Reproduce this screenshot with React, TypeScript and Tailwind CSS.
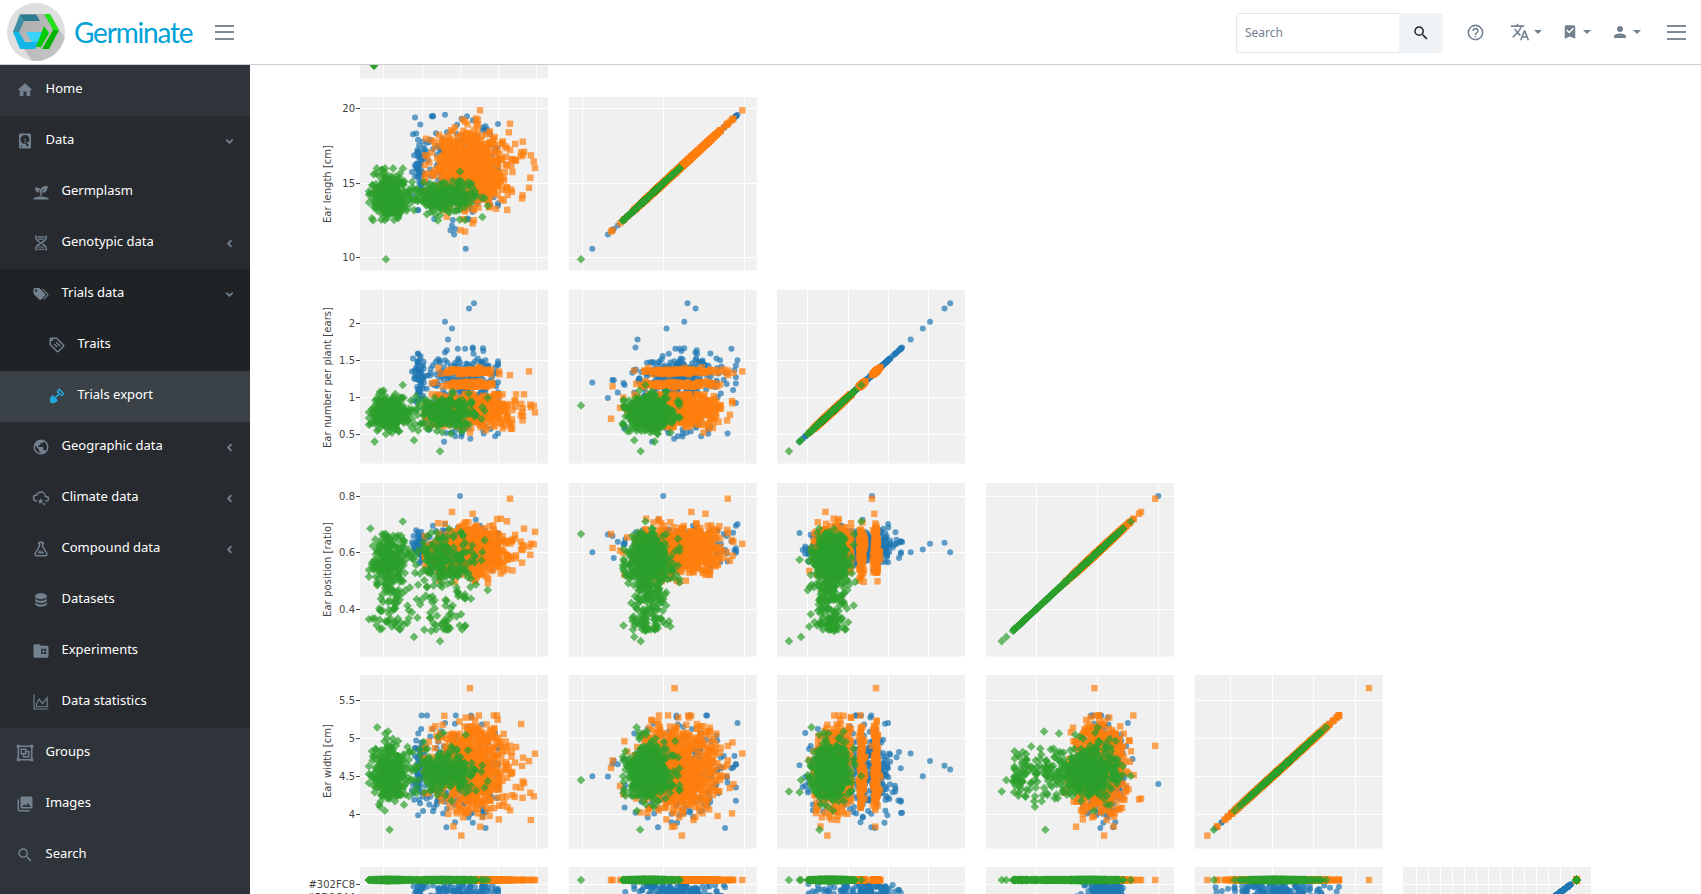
import { ChevronDown, ChevronLeft } from "lucide-react";

const paths: Record<string, string> = {
  home: "M10,20V14H14V20H19V12H22L12,3L2,12H5V20H10Z",
  harddisk:
    "M6,2H18A2,2 0 0,1 20,4V20A2,2 0 0,1 18,22H6A2,2 0 0,1 4,20V4A2,2 0 0,1 6,2M12,4A6,6 0 0,0 6,10C6,13.31 8.69,16 12.1,16L11.22,13.77C10.95,13.29 11.14,12.68 11.62,12.4L12.13,12.11C12.61,11.84 13.22,12.03 13.5,12.5L14.94,14.4C16.78,13.3 18,11.28 18,10A6,6 0 0,0 12,4M12,9A1,1 0 0,1 13,10A1,1 0 0,1 12,11A1,1 0 0,1 11,10A1,1 0 0,1 12,9M7,18A1,1 0 0,0 6,19A1,1 0 0,0 7,20A1,1 0 0,0 8,19A1,1 0 0,0 7,18M12.09,13.27L14.58,19.58L17.17,18.08L12.95,12.77L12.09,13.27Z",
  sprout:
    "M2,22V20C2,20 7,18 12,18C17,18 22,20 22,20V22H2M11.3,9.1C10.1,5.2 4,6.1 4,6.1C4,6.1 4.2,13.9 9.9,12.7C9.5,9.8 8,9 8,9C10.8,9 11,12.4 11,12.4V17C11.3,17 11.7,17 12,17C12.3,17 12.7,17 13,17V12.8C13,12.8 13,8.9 16,7.9C16,7.9 14,10.9 14,12.9C21,13.6 21,4 21,4C21,4 12.1,3 11.3,9.1Z",
  dna: "M4 2H6V4C6 5.44 6.68 6.61 7.88 7.78C8.74 8.61 9.89 9.41 11.09 10.2L9.26 11.39C8.27 10.72 7.31 10 6.5 9.21C5.07 7.82 4 6.1 4 4V2M18 2H20V4C20 6.1 18.93 7.82 17.5 9.21C16.09 10.59 14.29 11.73 12.54 12.84C10.79 13.96 9.09 15.05 7.88 16.22C6.68 17.39 6 18.56 6 20V22H4V20C4 17.9 5.07 16.18 6.5 14.79C7.91 13.41 9.71 12.27 11.46 11.16C13.21 10.04 14.91 8.95 16.12 7.78C17.32 6.61 18 5.44 18 4V2M14.74 12.61C15.73 13.28 16.69 14 17.5 14.79C18.93 16.18 20 17.9 20 20V22H18V20C18 18.56 17.32 17.39 16.12 16.22C15.26 15.39 14.11 14.59 12.91 13.8L14.74 12.61M7 3H17V4L16.94 4.5H7.06L7 4V3M7.68 6H16.32C16.08 6.34 15.8 6.69 15.42 7.06L14.91 7.5H9.07L8.58 7.06C8.2 6.69 7.92 6.34 7.68 6M9.09 16.5H14.93L15.42 16.94C15.8 17.31 16.08 17.66 16.32 18H7.68C7.92 17.66 8.2 17.31 8.58 16.94L9.09 16.5M7.06 19.5H16.94L17 20V21H7V20L7.06 19.5Z",
  tags: "M5.5,9A1.5,1.5 0 0,0 7,7.5A1.5,1.5 0 0,0 5.5,6A1.5,1.5 0 0,0 4,7.5A1.5,1.5 0 0,0 5.5,9M17.41,11.58C17.77,11.94 18,12.44 18,13C18,13.55 17.78,14.05 17.41,14.41L12.41,19.41C12.05,19.77 11.55,20 11,20C10.45,20 9.95,19.78 9.58,19.41L2.59,12.42C2.22,12.05 2,11.55 2,11V6C2,4.89 2.89,4 4,4H9C9.55,4 10.05,4.22 10.41,4.58L17.41,11.58M13.54,5.71L14.54,4.71L21.41,11.58C21.78,11.94 22,12.45 22,13C22,13.55 21.78,14.05 21.42,14.41L16.04,19.79L15.04,18.79L20.75,13L13.54,5.71Z",
  tag: "M5.5,7A1.5,1.5 0 0,0 7,5.5A1.5,1.5 0 0,0 5.5,4A1.5,1.5 0 0,0 4,5.5A1.5,1.5 0 0,0 5.5,7M21.41,11.58C21.77,11.94 22,12.44 22,13C22,13.55 21.78,14.05 21.41,14.41L14.41,21.41C14.05,21.77 13.55,22 13,22C12.45,22 11.95,21.77 11.58,21.41L2.59,12.41C2.22,12.05 2,11.55 2,11V4C2,2.89 2.89,2 4,2H11C11.55,2 12.05,2.22 12.41,2.58L21.41,11.58M13,20L20,13L11,4H4V11L13,20M10.09,8.91L11.5,7.5L17,13L15.59,14.41L10.09,8.91M7.59,11.41L9,10L13,14L11.59,15.41L7.59,11.41Z",
  shovel:
    "M15.1 1.81L12.27 4.64C11.5 5.42 11.5 6.69 12.27 7.47L13.68 8.88L9.13 13.43L6.31 10.6L4.89 12C-.06 17 3.5 20.5 3.5 20.5C3.5 20.5 7 24 12 19.09L13.41 17.68L10.61 14.88L15.15 10.34L16.54 11.73C17.32 12.5 18.59 12.5 19.37 11.73L22.2 8.9L15.1 1.81M17.93 10.28L16.55 8.9L15.11 7.46L13.71 6.06L15.12 4.65L19.35 8.88L17.93 10.28Z",
  earth:
    "M17.9,17.39C17.64,16.59 16.89,16 16,16H15V13A1,1 0 0,0 14,12H8V10H10A1,1 0 0,0 11,9V7H13A2,2 0 0,0 15,5V4.59C17.93,5.77 20,8.64 20,12C20,14.08 19.2,15.97 17.9,17.39M11,19.93C7.05,19.44 4,16.08 4,12C4,11.38 4.08,10.78 4.21,10.21L9,15V16A2,2 0 0,0 11,18M12,2A10,10 0 0,0 2,12A10,10 0 0,0 12,22A10,10 0 0,0 22,12A10,10 0 0,0 12,2Z",
  cloud:
    "M6,17A5,5 0 0,1 1,12A5,5 0 0,1 6,7C7,4.65 9.3,3 12,3C15.43,3 18.24,5.66 18.5,9.03L19,9A4,4 0 0,1 23,13A4,4 0 0,1 19,17H17.5V15H19A2,2 0 0,0 21,13A2,2 0 0,0 19,11H17V10A5,5 0 0,0 12,5C9.5,5 7.45,6.82 7.06,9.19C6.73,9.07 6.37,9 6,9A3,3 0 0,0 3,12A3,3 0 0,0 6,15H6.5V17H6M11.5,12L12.7,15H15.5L13.3,17L14.2,20L11.5,18.2L8.8,20L9.7,17L7.5,15H10.3L11.5,12M16.5,18.5A1.5,1.5 0 0,1 18,20A1.5,1.5 0 0,1 16.5,21.5A1.5,1.5 0 0,1 15,20A1.5,1.5 0 0,1 16.5,18.5Z",
  flask:
    "M5,19A1,1 0 0,0 6,20H18A1,1 0 0,0 19,19C19,18.79 18.93,18.59 18.82,18.43L13,8.35V4H11V8.35L5.18,18.43C5.07,18.59 5,18.79 5,19M6,22A3,3 0 0,1 3,19C3,18.4 3.18,17.84 3.5,17.37L9,7.81V6A1,1 0 0,1 8,5V4A2,2 0 0,1 10,2H14A2,2 0 0,1 16,4V5A1,1 0 0,1 15,6V7.81L20.5,17.37C20.82,17.84 21,18.4 21,19A3,3 0 0,1 18,22H6M13,16L14.34,14.66L16.27,18H7.73L10.39,13.39L13,16M12.5,12A0.5,0.5 0 0,1 13,12.5A0.5,0.5 0 0,1 12.5,13A0.5,0.5 0 0,1 12,12.5A0.5,0.5 0 0,1 12.5,12Z",
  database:
    "M12,3C7.58,3 4,4.79 4,7C4,9.21 7.58,11 12,11C16.42,11 20,9.21 20,7C20,4.79 16.42,3 12,3M4,9V12C4,14.21 7.58,16 12,16C16.42,16 20,14.21 20,12V9C20,11.21 16.42,13 12,13C7.58,13 4,11.21 4,9M4,14V17C4,19.21 7.58,21 12,21C16.42,21 20,19.21 20,17V14C20,16.21 16.42,18 12,18C7.58,18 4,16.21 4,14Z",
  folder:
    "M4 3H10L12 5H20C21.1 5 22 5.9 22 7V19C22 20.1 21.1 21 20 21H4C2.9 21 2 20.1 2 19V5C2 3.9 2.9 3 4 3ZM12 9V12H15V9H12ZM16 9V12H19V9H16ZM12 13V16H15V13H12ZM16 13V16H19V13H16Z",
  chart:
    "M2 2H3.5V20.5H22V22H2V2ZM5 19V14.5L9.5 6.5L14 13L21 4V19H5ZM6.5 17.5H19.5V8.5L14 15.5L9.5 9.5L6.5 15V17.5Z",
  group:
    "M1,1V5H2V19H1V23H5V22H19V23H23V19H22V5H23V1H19V2H5V1M5,4H19V5H20V19H19V20H5V19H4V5H5M6,6V14H9V18H18V9H14V6M8,8H12V12H8M14,11H16V16H11V14H14",
  images:
    "M22,16V4A2,2 0 0,0 20,2H8A2,2 0 0,0 6,4V16A2,2 0 0,0 8,18H20A2,2 0 0,0 22,16M11,12L13.03,14.71L16,11L20,16H8M2,6V20A2,2 0 0,0 4,22H18V20H4V6",
  search:
    "M9.5,3A6.5,6.5 0 0,1 16,9.5C16,11.11 15.41,12.59 14.44,13.73L14.71,14H15.5L20.5,19L19,20.5L14,15.5V14.71L13.73,14.44C12.59,15.41 11.11,16 9.5,16A6.5,6.5 0 0,1 3,9.5A6.5,6.5 0 0,1 9.5,3M9.5,5C7,5 5,7 5,9.5C5,12 7,14 9.5,14C12,14 14,12 14,9.5C14,7 12,5 9.5,5Z",
  help: "M11,18H13V16H11V18M12,2A10,10 0 0,0 2,12A10,10 0 0,0 12,22A10,10 0 0,0 22,12A10,10 0 0,0 12,2M12,20C7.59,20 4,16.41 4,12C4,7.59 7.59,4 12,4C16.41,4 20,7.59 20,12C20,16.41 16.41,20 12,20M12,6A4,4 0 0,0 8,10H10A2,2 0 0,1 12,8A2,2 0 0,1 14,10C14,12 11,11.75 11,15H13C13,12.75 16,12.5 16,10A4,4 0 0,0 12,6Z",
  translate:
    "M12.87,15.07L10.33,12.56L10.36,12.53C12.1,10.59 13.34,8.36 14.07,6H17V4H10V2H8V4H1V6H12.17C11.5,7.92 10.44,9.75 9,11.35C8.07,10.32 7.3,9.19 6.69,8H4.69C5.42,9.63 6.42,11.17 7.67,12.56L2.58,17.58L4,19L9,14L12.11,17.11L12.87,15.07M18.5,10H16.5L12,22H14L15.12,19H19.87L21,22H23L18.5,10M15.88,17L17.5,12.67L19.12,17H15.88Z",
  bookmark:
    "M17,3A2,2 0 0,1 19,5V21L12,18L5,21V5C5,3.89 5.9,3 7,3H17M11,14L17.25,7.76L15.84,6.34L11,11.18L8.41,8.59L7,10L11,14Z",
  account:
    "M12,4A4,4 0 0,1 16,8A4,4 0 0,1 12,12A4,4 0 0,1 8,8A4,4 0 0,1 12,4M12,14C16.42,14 20,15.79 20,18V20H4V18C4,15.79 7.58,14 12,14Z",
};

function Icon({ name, className }: { name: string; className: string }) {
  return (
    <svg viewBox="0 0 24 24" className={className} fill="currentColor">
      <path d={paths[name]} fillRule="evenodd" />
    </svg>
  );
}

type NavItem = {
  label: string;
  icon: string;
  level: number;
  bg: string;
  chevron?: "down" | "left";
  active?: boolean;
};

const navItems: NavItem[] = [
  { label: "Home", icon: "home", level: 0, bg: "bg-[#2f343b]" },
  { label: "Data", icon: "harddisk", level: 0, bg: "bg-[#272a2f]", chevron: "down" },
  { label: "Germplasm", icon: "sprout", level: 1, bg: "bg-[#272a2f]" },
  { label: "Genotypic data", icon: "dna", level: 1, bg: "bg-[#272a2f]", chevron: "left" },
  { label: "Trials data", icon: "tags", level: 1, bg: "bg-[#1f2326]", chevron: "down" },
  { label: "Traits", icon: "tag", level: 2, bg: "bg-[#1f2326]" },
  { label: "Trials export", icon: "shovel", level: 2, bg: "bg-[#3a4248]", active: true },
  { label: "Geographic data", icon: "earth", level: 1, bg: "bg-[#272a2f]", chevron: "left" },
  { label: "Climate data", icon: "cloud", level: 1, bg: "bg-[#272a2f]", chevron: "left" },
  { label: "Compound data", icon: "flask", level: 1, bg: "bg-[#272a2f]", chevron: "left" },
  { label: "Datasets", icon: "database", level: 1, bg: "bg-[#272a2f]" },
  { label: "Experiments", icon: "folder", level: 1, bg: "bg-[#272a2f]" },
  { label: "Data statistics", icon: "chart", level: 1, bg: "bg-[#272a2f]" },
  { label: "Groups", icon: "group", level: 0, bg: "bg-[#2f343b]" },
  { label: "Images", icon: "images", level: 0, bg: "bg-[#2f343b]" },
  { label: "Search", icon: "search", level: 0, bg: "bg-[#2f343b]" },
];

function Logo() {
  return (
    <svg viewBox="7 3 58 58" className="w-[58px] h-[58px] shrink-0">
      <defs>
        <clipPath id="logo-clip">
          <circle cx="36" cy="32" r="29" />
        </clipPath>
        <linearGradient id="logo-shadow" x1="0" y1="0" x2="1" y2="1">
          <stop offset="0" stopColor="#a9a9a9" />
          <stop offset="1" stopColor="#d4d4d4" />
        </linearGradient>
      </defs>
      <circle cx="36" cy="32" r="29" fill="#dfdfdf" />
      <polygon
        clipPath="url(#logo-clip)"
        points="20,14 50,14 60,31 80,55 60,80 38,70 13,32"
        fill="url(#logo-shadow)"
      />
      <polygon points="20,14.5 36,14.5 40,21 24,21" fill="#2a7a90" />
      <polygon points="20,14.5 24,21 19,32 13,32" fill="#3c8fa6" />
      <polygon points="13,32 19,32 25,42 38,42 35,49 20,49" fill="#12b5e6" />
      <polygon points="26,32 43,32 38,42 32,42" fill="#37d2ff" />
      <polygon points="44,14 50,14 59,30 53,30" fill="#22e01a" />
      <polygon points="53,30 59,30 49,49 42,49" fill="#00b300" />
      <polygon points="44,26 49,33 41,47 36,47" fill="#00cc00" />
    </svg>
  );
}

function Caret() {
  return <span className="ml-[4px] w-0 h-0 border-x-[4px] border-t-[4px] border-x-transparent border-t-[#73818f]" />;
}

function Header() {
  return (
    <header className="h-[65px] shrink-0 flex items-center bg-white border-b border-[#c8ced3]">
      <div className="pl-[7px] flex items-center">
        <Logo />
        <span className="ml-[9px] font-['Lato',sans-serif] text-[28px] tracking-[-1.2px] leading-none text-[#00a2d8]">
          Germinate
        </span>
      </div>
      <div className="ml-[23px] w-[19px] flex flex-col gap-[4.5px]">
        <span className="h-[2px] bg-[#7f8c98]" />
        <span className="h-[2px] bg-[#7f8c98]" />
        <span className="h-[2px] bg-[#7f8c98]" />
      </div>
      <div className="ml-auto flex items-center pr-[15px] text-[#73818f]">
        <div className="flex h-[40px] w-[207px] mt-[1px] rounded-[4px]">
          <input
            placeholder="Search"
            className="w-[163px] px-[8px] text-[12px] font-['Noto_Sans',sans-serif] border border-[#e4e7ea] border-r-0 rounded-l-[4px] placeholder:text-[#73818f] outline-none"
          />
          <div className="flex-1 flex items-center justify-center bg-[#f0f3f5] rounded-r-[4px]">
            <Icon name="search" className="w-[18px] h-[18px] text-[#23282c]" />
          </div>
        </div>
        <Icon name="help" className="ml-[23px] w-[19px] h-[19px]" />
        <div className="ml-[25px] flex items-center">
          <Icon name="translate" className="w-[20px] h-[20px]" />
          <Caret />
        </div>
        <div className="ml-[19px] flex items-center">
          <Icon name="bookmark" className="w-[18px] h-[18px]" />
          <Caret />
        </div>
        <div className="ml-[20px] flex items-center">
          <Icon name="account" className="w-[18px] h-[18px]" />
          <Caret />
        </div>
        <div className="ml-[26px] w-[19px] flex flex-col gap-[4.5px]">
          <span className="h-[2px] bg-[#7f8c98]" />
          <span className="h-[2px] bg-[#7f8c98]" />
          <span className="h-[2px] bg-[#7f8c98]" />
        </div>
      </div>
    </header>
  );
}

function Sidebar() {
  return (
    <aside className="w-[250px] shrink-0 bg-[#2f343b] font-['Noto_Sans',sans-serif] text-[13px] text-white">
      {navItems.map((item) => (
        <div
          key={item.label}
          className={`h-[51px] flex items-center pr-[15px] ${item.bg} ${
            item.level === 0 ? "pl-[16px]" : item.level === 1 ? "pl-[32px]" : "pl-[48px]"
          }`}
        >
          <Icon
            name={item.icon}
            className={`w-[18px] h-[18px] mr-[11.5px] mb-[1px] shrink-0 ${item.active ? "text-[#20a8d8]" : "text-[#73818f]"}`}
          />
          <span className="mb-[3px]">{item.label}</span>
          {item.chevron === "down" && <ChevronDown className="ml-auto w-[11px] h-[11px] text-[#73818f]" strokeWidth={4} />}
          {item.chevron === "left" && <ChevronLeft className="ml-auto w-[11px] h-[11px] text-[#73818f]" strokeWidth={4} />}
        </div>
      ))}
    </aside>
  );
}

// scatter matrix data, seeded so the picture stays the same
type Pt = { a: number; L: number; N: number; P: number; W: number; cx: number; cy: number };

let seed = 20240611;
const rnd = () => {
  seed = (seed + 0x6d2b79f5) | 0;
  let t = Math.imul(seed ^ (seed >>> 15), 1 | seed);
  t = (t + Math.imul(t ^ (t >>> 7), 61 | t)) ^ t;
  return ((t ^ (t >>> 14)) >>> 0) / 4294967296;
};
const gauss = (m: number, s: number) => {
  const u = Math.max(rnd(), 1e-6);
  return m + s * Math.sqrt(-2 * Math.log(u)) * Math.cos(2 * Math.PI * rnd());
};
const range = (a: number, b: number) => a + (b - a) * rnd();
const clamp = (v: number, lo: number, hi: number) => Math.min(hi, Math.max(lo, v));
const blueRow = (y: number) => ({ cy: y, cx: 1576.7 - (y - 880) / 0.75 });

const blue: Pt[] = [];
for (let i = 0; i < 340; i++) {
  const stripe = rnd() < 0.12;
  const N = rnd() < 0.75 ? gauss(1.25, 0.17) : gauss(0.75, 0.15);
  blue.push({
    a: stripe ? gauss(420, 3) : clamp(gauss(462, 19), 412, 498),
    L: clamp(stripe ? gauss(16, 1.2) : gauss(15.8, 1.5), 11.5, 19.5),
    N: stripe ? range(0.9, 1.6) : N,
    P: clamp(gauss(0.62, 0.032), 0.48, 0.72),
    W: clamp(gauss(4.55, 0.27), 3.75, 5.3),
    ...blueRow(rnd() < 0.75 ? range(885, 915) : range(884, 960)),
  });
}
blue.push(
  { a: 474, L: 16.5, N: 2.27, P: 0.6, W: 4.59, ...blueRow(930) },
  { a: 469, L: 17, N: 2.2, P: 0.634, W: 4.64, ...blueRow(930) },
  { a: 445, L: 16.3, N: 2.02, P: 0.63, W: 4.7, ...blueRow(930) },
  { a: 452, L: 15.2, N: 1.93, P: 0.61, W: 4.5, ...blueRow(930) },
  { a: 448, L: 13.4, N: 1.78, P: 0.6, W: 4.8, ...blueRow(930) },
  { a: 465.7, L: 10.6, N: 1.2, P: 0.6, W: 4.5, ...blueRow(930) },
  { a: 445, L: 19.6, N: 1.5, P: 0.7, W: 5.2, ...blueRow(930) },
  { a: 460, L: 15, N: 1.3, P: 0.8, W: 4.4, ...blueRow(930) }
);

const orange: Pt[] = [];
for (let i = 0; i < 720; i++) {
  const r = rnd();
  const band = r > 0.85 ? 1.35 : r > 0.7 ? 1.17 : 0;
  orange.push({
    a: clamp(band ? gauss(468, 12) : gauss(472, 22), 425, 535),
    L: clamp(gauss(16, 1.25), 11.4, 19.6),
    N: band ? gauss(band, 0.018) : Math.min(1.04, gauss(0.84, 0.11)),
    P: clamp(gauss(0.61, 0.042), 0.46, 0.76),
    W: clamp(gauss(4.62, 0.28), 3.72, 5.3),
    cx: 1576.7,
    cy: 880,
  });
}
orange.push(
  { a: 480, L: 19.9, N: 1.35, P: 0.63, W: 4.8, cx: 1576.7, cy: 880 },
  { a: 470, L: 15.7, N: 1.35, P: 0.59, W: 5.66, cx: 1576.7, cy: 880 },
  { a: 529, L: 14.7, N: 1.35, P: 0.62, W: 4.7, cx: 1576.7, cy: 880 },
  { a: 510, L: 19, N: 1.3, P: 0.79, W: 4.9, cx: 1576.7, cy: 880 }
);

const green: Pt[] = [];
for (let i = 0; i < 560; i++) {
  const first = rnd() < 0.52;
  const tail = rnd() < 0.24;
  green.push({
    a: clamp(first ? gauss(390, 8) : gauss(446, 17), 369, 490),
    L: clamp(first ? gauss(14.2, 0.72) : gauss(14, 0.55), 12.5, 16),
    N: gauss(0.79, 0.11),
    P: tail ? range(0.32, 0.52) : clamp(gauss(0.575, 0.044), 0.45, 0.73),
    W: first ? gauss(4.55, 0.19) : gauss(4.55, 0.15),
    cx: 1576.7,
    cy: 880,
  });
}
green.push(
  { a: 386, L: 9.9, N: 0.89, P: 0.665, W: 4.45, cx: 1576.7, cy: 880 },
  { a: 440, L: 13.6, N: 0.27, P: 0.285, W: 4.3, cx: 1576.7, cy: 880 },
  { a: 414, L: 13.2, N: 0.42, P: 0.3, W: 4.45, cx: 1576.7, cy: 880 }
);

const xOf = (p: Pt, c: number) =>
  [p.a, 663.3 + (p.L - 15) * 16.13, 807.5 + (p.N - 0.5) * 80.6, 1036.7 + (p.P - 0.4) * 304, 1230.7 + (p.W - 4) * 83.3, p.cx][c];
const yOf = (p: Pt, r: number) =>
  [0, 183.3 - (p.L - 15) * 14.9, 397.3 - (p.N - 1) * 74, 552.3 - (p.P - 0.6) * 282, 814.3 - (p.W - 4) * 76, p.cy][r];

const colX = [360, 568.7, 777, 986, 1194.7, 1403];
const rowY = [-95, 97, 290, 483, 675, 867];
const PW = 188;
const PH = 173.5;
const colGrid = [
  [383.5, 422.5, 460.5, 498.5, 536.5],
  [582.5, 663.5, 744.5],
  [807.5, 848.5, 888.5, 928.5],
  [1036.5, 1097.5, 1158.5],
  [1230.5, 1272.5, 1313.5, 1355.5],
  Array.from({ length: 14 }, (_, i) => 1416.5 + i * 12),
];
const rowGrid = [
  [],
  [108.5, 183.5, 257.5],
  [323.5, 360.5, 397.5, 434.5],
  [496.5, 552.5, 609.5],
  [700.5, 738.5, 776.5, 814.5],
  [884.5],
];
const rowTicks: string[][] = [
  [],
  ["20", "15", "10"],
  ["2", "1.5", "1", "0.5"],
  ["0.8", "0.6", "0.4"],
  ["5.5", "5", "4.5", "4"],
  ["#302FC8"],
];
const titles = [
  { label: "Ear length [cm]", cy: 184, len: 78 },
  { label: "Ear number per plant [ears]", cy: 377.5, len: 141 },
  { label: "Ear position [ratio]", cy: 569.5, len: 95 },
  { label: "Ear width [cm]", cy: 761, len: 74 },
];

function Markers({ r, c }: { r: number; c: number }) {
  const x0 = colX[c];
  const y0 = rowY[r];
  const keep = (x: number, y: number) => x > x0 - 5 && x < x0 + PW + 5 && y > y0 - 5 && y < Math.min(y0 + PH, 894) + 5;
  return (
    <g clipPath={`url(#panel-${r}-${c})`} fillOpacity={0.7}>
      {blue.map((p, i) => {
        const x = xOf(p, c);
        const y = yOf(p, r);
        return keep(x, y) ? <circle key={i} cx={x} cy={y} r={3} fill="#1f77b4" /> : null;
      })}
      {orange.map((p, i) => {
        const x = xOf(p, c);
        const y = yOf(p, r);
        return keep(x, y) ? <rect key={i} x={x - 3.2} y={y - 3.2} width={6.4} height={6.4} fill="#ff7f0e" /> : null;
      })}
      {green.map((p, i) => {
        const x = xOf(p, c);
        const y = yOf(p, r);
        return keep(x, y) ? <path key={i} d={`M${x} ${y - 4.3}l4.3 4.3l-4.3 4.3l-4.3 -4.3z`} fill="#2ca02c" /> : null;
      })}
    </g>
  );
}

function Panel({ r, c }: { r: number; c: number }) {
  const x0 = colX[c];
  const y0 = rowY[r];
  return (
    <g>
      <clipPath id={`panel-${r}-${c}`}>
        <rect x={x0} y={y0} width={PW} height={PH} />
      </clipPath>
      <rect x={x0} y={y0} width={PW} height={PH} fill="#f0f0f0" />
      {colGrid[c].map((x) => (
        <line key={x} x1={x} x2={x} y1={y0} y2={y0 + PH} stroke="#fff" />
      ))}
      {rowGrid[r].map((y) => (
        <line key={y} x1={x0} x2={x0 + PW} y1={y} y2={y} stroke="#fff" />
      ))}
      {r > 0 && <Markers r={r} c={c} />}
    </g>
  );
}

function ScatterMatrix() {
  const panels: { r: number; c: number }[] = [];
  for (let r = 0; r < 6; r++) {
    for (let c = 0; c <= r; c++) panels.push({ r, c });
  }
  return (
    <svg viewBox="250 65 1451 829" className="block w-[1451px] h-[829px]">
      {panels.map((p) => (
        <Panel key={`${p.r}-${p.c}`} r={p.r} c={p.c} />
      ))}
      <path d="M374 61.5l4.3 4.3l-4.3 4.3l-4.3 -4.3z" fill="#2ca02c" />
      <g className="font-['DejaVu_Sans',sans-serif]" fill="#444" fontSize={10}>
        {rowTicks.map((ticks, r) =>
          ticks.map((t, i) => (
            <g key={t}>
              <line x1={356} x2={360} y1={rowGrid[r][i]} y2={rowGrid[r][i]} stroke="#444" />
              <text x={355} y={rowGrid[r][i] + 3.5} textAnchor="end">
                {t}
              </text>
            </g>
          ))
        )}
        <text x={355} y={900.5} textAnchor="end">
          #5D9C44
        </text>
        {titles.map((t) => (
          <text
            key={t.label}
            transform={`translate(331 ${t.cy}) rotate(-90)`}
            textAnchor="middle"
            textLength={t.len}
            lengthAdjust="spacing"
          >
            {t.label}
          </text>
        ))}
      </g>
    </svg>
  );
}

export default function App() {
  return (
    <div className="h-screen w-full overflow-hidden flex flex-col bg-white">
      <Header />
      <div className="flex flex-1 min-h-0">
        <Sidebar />
        <main className="flex-1 min-w-0 overflow-hidden">
          <ScatterMatrix />
        </main>
      </div>
    </div>
  );
}
